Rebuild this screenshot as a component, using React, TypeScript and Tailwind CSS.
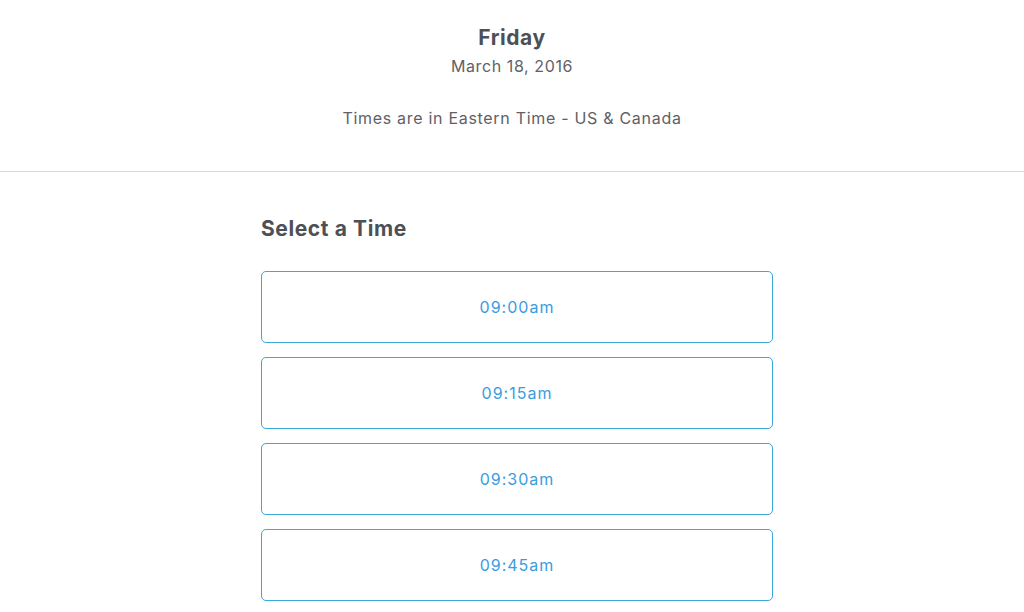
const times = ['09:00am', '09:15am', '09:30am', '09:45am'];

export default function App() {
  return (
    <div className="min-h-screen bg-white text-[#4d5055]" style={{ fontFamily: 'Inter, "Liberation Sans", sans-serif' }}>
      {/* header */}
      <div className="flex flex-col items-center pt-[24px] h-[172px] border-b border-[#dadada]">
        <h1 className="text-[21px] font-bold leading-[28px] tracking-[0.6px]">Friday</h1>
        <p className="text-[16px] leading-[20px] mt-[4px] tracking-[0.6px] text-[#5f6166]">March 18, 2016</p>
        <p className="text-[16px] leading-[20px] mt-[32px] tracking-[0.7px] text-[#5f6166]">Times are in Eastern Time - US &amp; Canada</p>
      </div>

      {/* time list */}
      <div className="w-[512px] ml-[261px] pt-[43px]">
        <h2 className="text-[21px] font-bold leading-[28px] tracking-[0.6px] mb-[28px]">Select a Time</h2>
        <div className="flex flex-col gap-[14px]">
          {times.map((t) => (
            <button
              key={t}
              className="h-[72px] w-full rounded-[5px] border-[1.5px] border-[#3aa8d8] text-[#3a9ce0] text-[16px] tracking-[1px] bg-white"
            >
              {t}
            </button>
          ))}
        </div>
      </div>
    </div>
  );
}
